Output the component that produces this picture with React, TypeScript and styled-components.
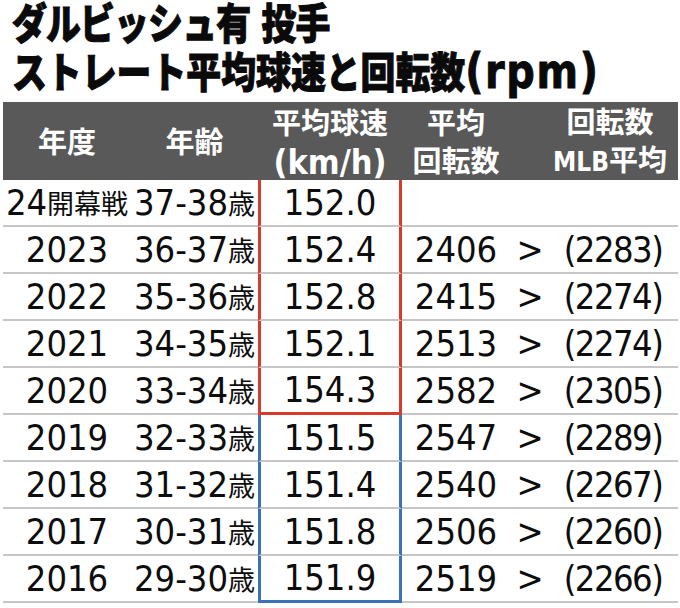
import { Fragment } from "react"
import styled, { createGlobalStyle, css } from "styled-components"

type Tone = "red" | "blue"

interface Row {
  year: string
  age: string
  speed: string
  spin: string
  mlb: string
  tone: Tone
  last?: boolean
}

const rows: Row[] = [
  { year: "24開幕戦", age: "37-38歳", speed: "152.0", spin: "", mlb: "", tone: "red" },
  { year: "2023", age: "36-37歳", speed: "152.4", spin: "2406", mlb: "(2283)", tone: "red" },
  { year: "2022", age: "35-36歳", speed: "152.8", spin: "2415", mlb: "(2274)", tone: "red" },
  { year: "2021", age: "34-35歳", speed: "152.1", spin: "2513", mlb: "(2274)", tone: "red" },
  { year: "2020", age: "33-34歳", speed: "154.3", spin: "2582", mlb: "(2305)", tone: "red", last: true },
  { year: "2019", age: "32-33歳", speed: "151.5", spin: "2547", mlb: "(2289)", tone: "blue" },
  { year: "2018", age: "31-32歳", speed: "151.4", spin: "2540", mlb: "(2267)", tone: "blue" },
  { year: "2017", age: "30-31歳", speed: "151.8", spin: "2506", mlb: "(2260)", tone: "blue" },
  { year: "2016", age: "29-30歳", speed: "151.9", spin: "2519", mlb: "(2266)", tone: "blue", last: true },
]

const toneColor = { red: "#d83a2e", blue: "#3c70b8" }

const GlobalStyle = createGlobalStyle`
  html, body {
    margin: 0;
    padding: 0;
    background: #ffffff;
  }
  body {
    width: 680px;
    height: 608px;
    overflow: hidden;
  }
`

const Page = styled.div`
  width: 680px;
  height: 608px;
  background: #fff;
  color: #111;
`

const Title = styled.h1`
  margin: 0;
  padding: 2px 0 0 12px;
  font-family: "DejaVu Sans", "Noto Sans CJK JP", sans-serif;
  font-weight: 900;
  font-size: 42px;
  line-height: 46px;
  color: #0a0a0a;
  white-space: nowrap;
  -webkit-text-stroke: 1px #0a0a0a;
`

const TitleLine = styled.div<{ $tight?: boolean }>`
  transform: scaleX(0.83);
  transform-origin: left center;
  letter-spacing: ${({ $tight }) => ($tight ? "-1px" : "0")};
`

const Rpm = styled.span`
  font-size: 48px;
  letter-spacing: 2px;
`

const Table = styled.div`
  margin: 5px 0 0 3px;
  width: 675px;
`

const grid = css`
  display: grid;
  grid-template-columns: 128px 127px 144px 108px 40px 128px;
`

const HeadRow = styled.div`
  ${grid};
  height: 78px;
  background: #595959;
  color: #fff;
`

const HeadCell = styled.div<{ $shift?: number }>`
  display: flex;
  flex-direction: column;
  align-items: center;
  justify-content: center;
  padding-top: 2px;
  font-family: "DejaVu Sans", "Noto Sans CJK JP", sans-serif;
  font-weight: 700;
  font-size: 29px;
  line-height: 38px;
  white-space: nowrap;
  transform: translateX(${({ $shift }) => $shift ?? 0}px);
`

const HeadLatin = styled.span<{ $size: number }>`
  font-family: "DejaVu Sans Condensed", "DejaVu Sans", sans-serif;
  font-stretch: condensed;
  font-size: ${({ $size }) => $size}px;
`

const DataRow = styled.div`
  ${grid};
  height: 47px;
`

const Cell = styled.div<{ $tone?: Tone; $last?: boolean; $pad?: number; $tight?: boolean }>`
  box-sizing: border-box;
  display: flex;
  align-items: center;
  justify-content: center;
  padding-right: ${({ $pad }) => $pad ?? 0}px;
  border-bottom: 2px solid #c6c6c6;
  font-family: "DejaVu Sans Condensed", "DejaVu Sans", "Noto Sans CJK JP", sans-serif;
  font-stretch: condensed;
  font-size: 36px;
  line-height: 44px;
  letter-spacing: ${({ $tight }) => ($tight ? "-1.5px" : "0")};
  color: #0d0d0d;
  white-space: nowrap;
  ${({ $tone, $last }) =>
    $tone &&
    css`
      border-left: 3px solid ${toneColor[$tone]};
      border-right: 3px solid ${toneColor[$tone]};
      ${$last && `border-bottom: 3px solid ${toneColor[$tone]};`}
    `}
`

const Kanji = styled.span`
  font-family: "Noto Sans CJK JP", sans-serif;
  font-size: 27px;
  letter-spacing: 0;
`

function Mixed({ text }: { text: string }) {
  const parts = text.split(/([\u3000-\u9fff]+)/).filter(Boolean)
  return (
    <>
      {parts.map((p, i) =>
        /[\u3000-\u9fff]/.test(p) ? <Kanji key={i}>{p}</Kanji> : <Fragment key={i}>{p}</Fragment>
      )}
    </>
  )
}

export default function App() {
  return (
    <Page>
      <GlobalStyle />
      <Title>
        <TitleLine $tight>ダルビッシュ有 投手</TitleLine>
        <TitleLine>
          ストレート平均球速と回転数<Rpm>(rpm)</Rpm>
        </TitleLine>
      </Title>
      <Table>
        <HeadRow>
          <HeadCell>年度</HeadCell>
          <HeadCell>年齢</HeadCell>
          <HeadCell>
            <span>平均球速</span>
            <HeadLatin $size={34}>(km/h)</HeadLatin>
          </HeadCell>
          <HeadCell>
            <span>平均</span>
            <span>回転数</span>
          </HeadCell>
          <HeadCell />
          <HeadCell $shift={-4}>
            <span>回転数</span>
            <span>
              <HeadLatin $size={26}>MLB</HeadLatin>平均
            </span>
          </HeadCell>
        </HeadRow>
        {rows.map((r) => (
          <DataRow key={r.year}>
            <Cell>
              <Mixed text={r.year} />
            </Cell>
            <Cell>
              <Mixed text={r.age} />
            </Cell>
            <Cell $tone={r.tone} $last={r.last}>
              {r.speed}
            </Cell>
            <Cell>{r.spin}</Cell>
            <Cell>{r.spin ? ">" : ""}</Cell>
            <Cell $pad={2} $tight>
              {r.mlb}
            </Cell>
          </DataRow>
        ))}
      </Table>
    </Page>
  )
}
